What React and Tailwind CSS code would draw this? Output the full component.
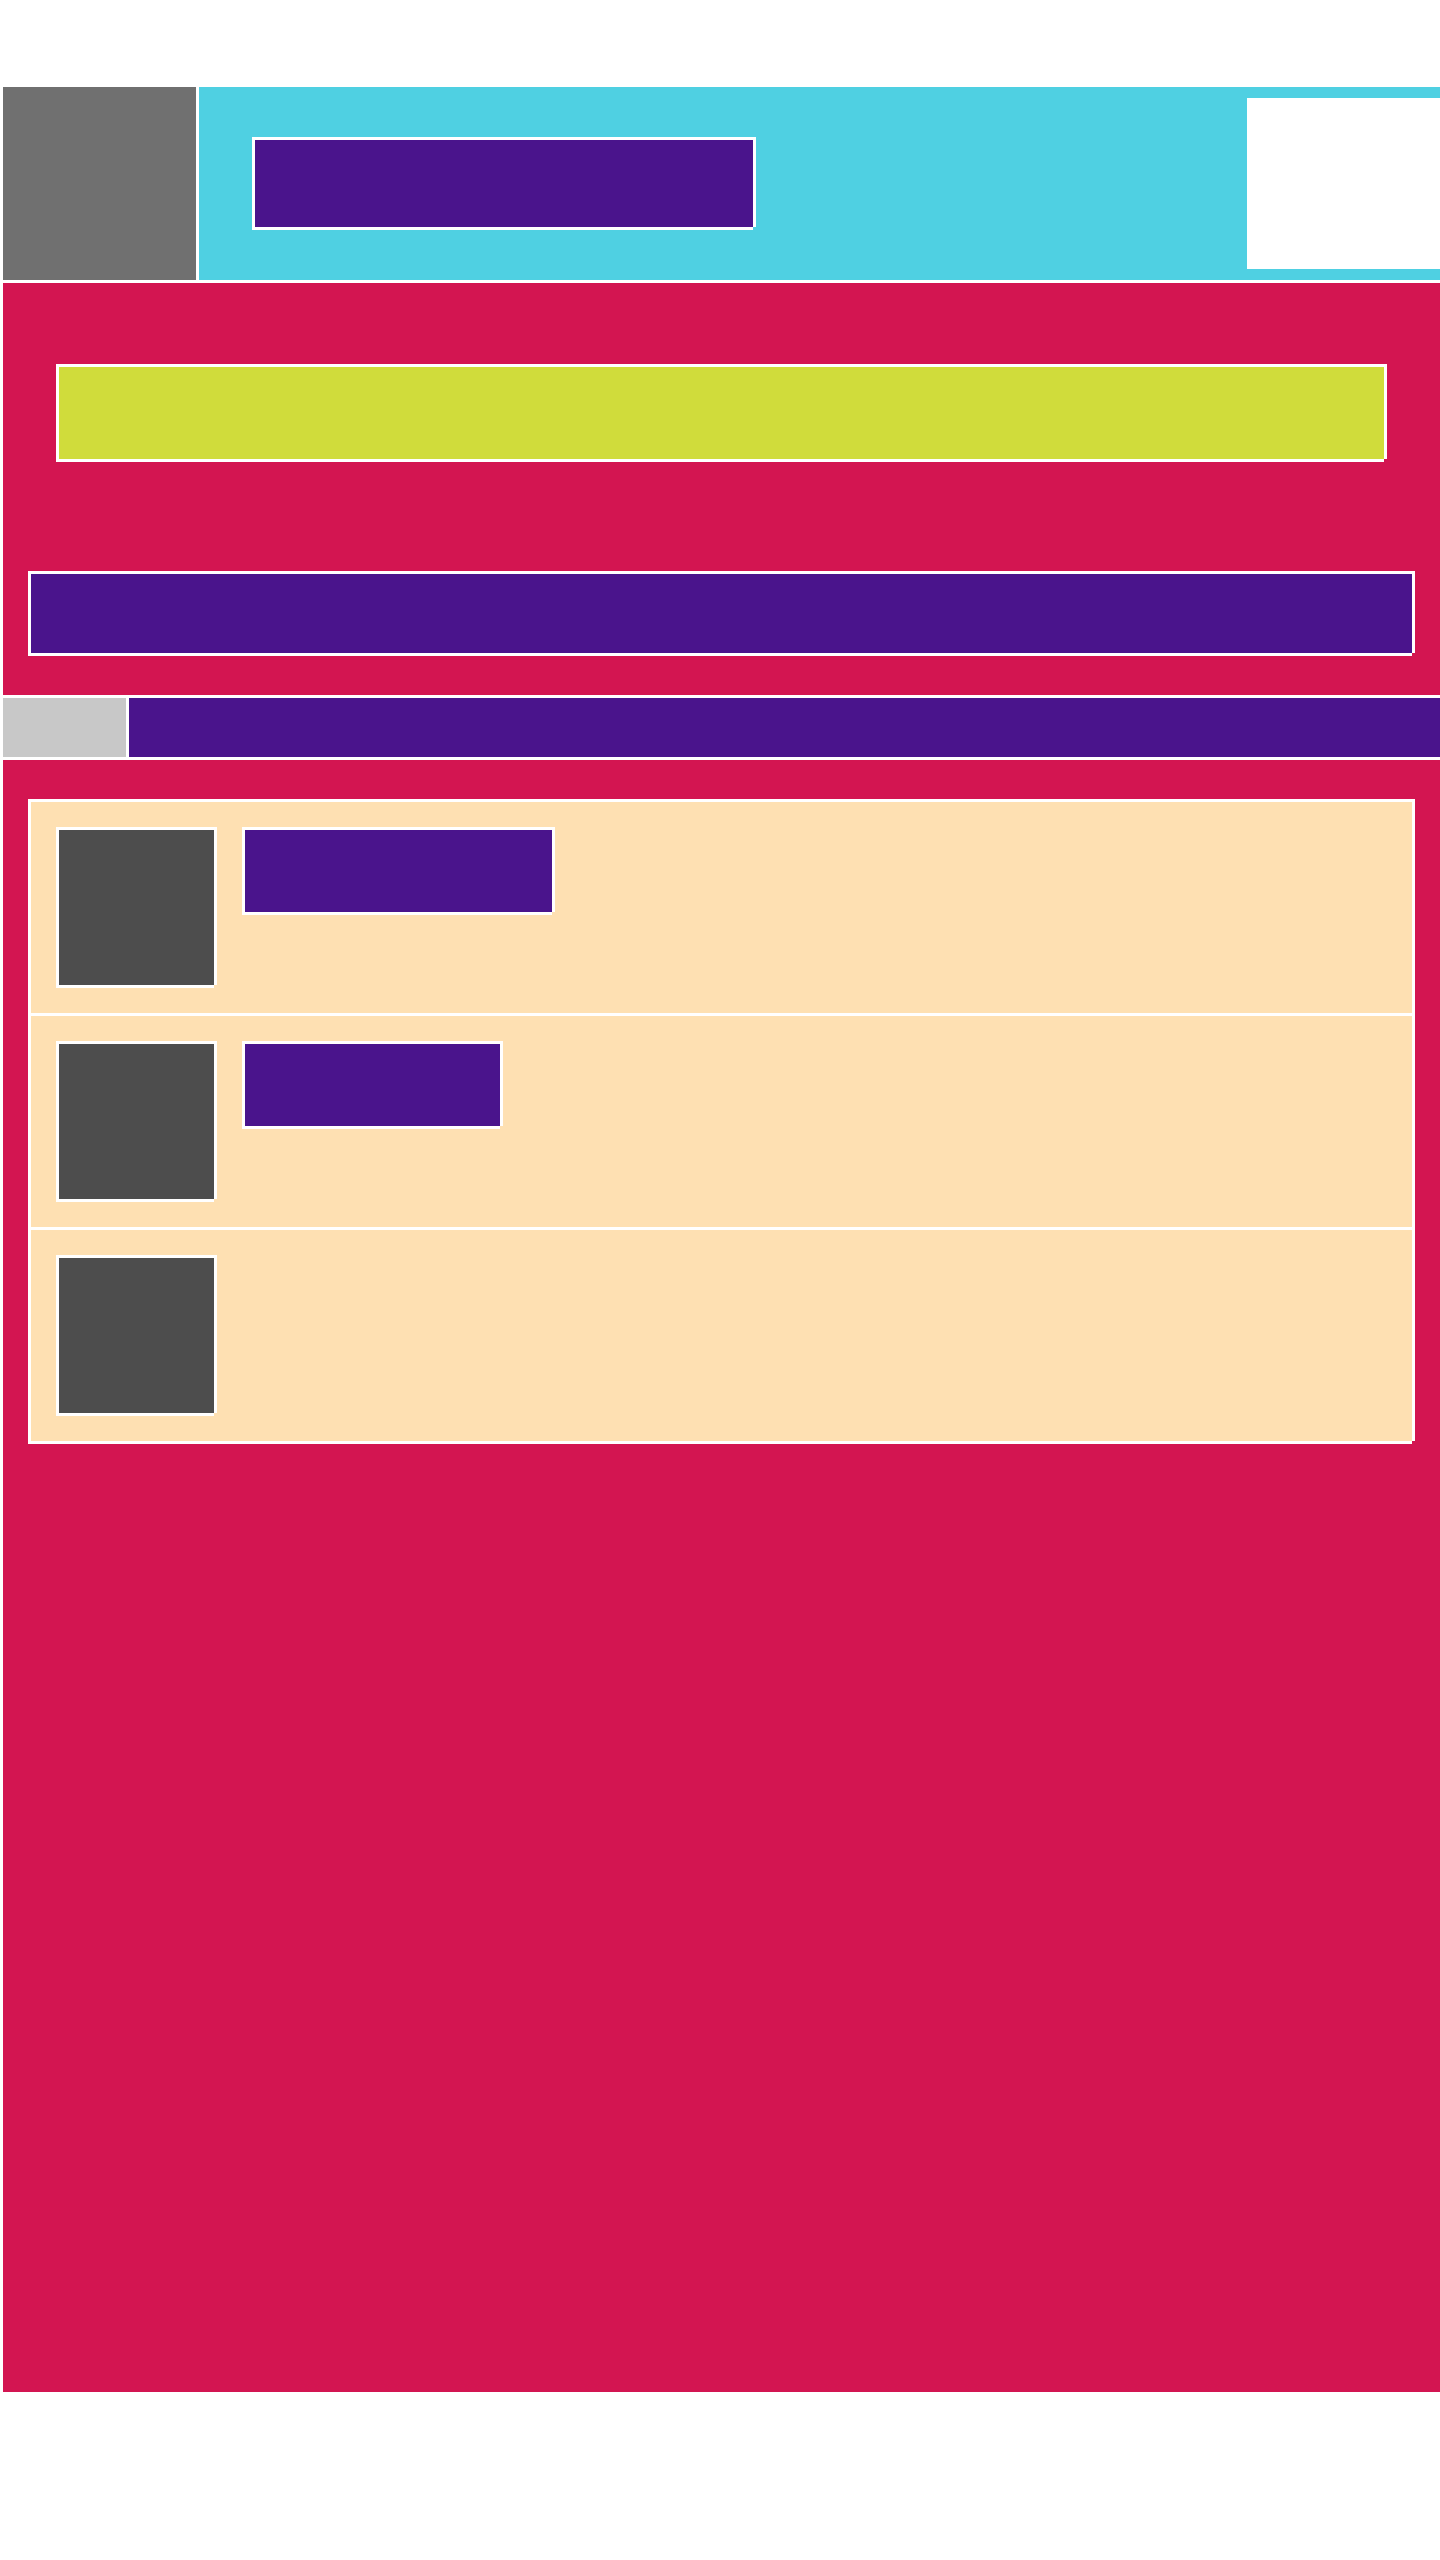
import React from "react";

const notch = "border-t-[3px] border-l-[3px] border-white shadow-[3px_0_0_#ffffff,0_3px_0_#ffffff]";

function Row({ title, titleW, first }) {
  return (
    <div className={`h-[211px] box-content pt-[25px] pl-[25px] flex items-start ${first ? "" : "border-t-[3px] border-white"}`} style={{ height: first ? 186 : 186 }}>
      <div className={`w-[158px] h-[158px] bg-[#4d4d4d] shrink-0 ${notch}`} />
      {title ? (
        <div className={`ml-[28px] h-[85px] bg-[#4a148c] ${notch}`} style={{ width: titleW }} />
      ) : null}
    </div>
  );
}

export default function App() {
  return (
    <div className="w-[1440px] bg-white pt-[87px] pl-[3px] font-['Liberation_Sans',sans-serif] overflow-hidden">
      {/* header */}
      <div className="flex h-[193px] gap-[3px]">
        <div className="w-[193px] shrink-0 bg-[#707070]" />
        <div className="flex-1 flex items-start bg-[#4fd0e2]">
          <div className={`ml-[53px] mt-[50px] w-[501px] h-[90px] bg-[#4a148c] ${notch}`} />
          <div className="ml-auto mt-[11px] w-[193px] h-[171px] bg-white" />
        </div>
      </div>

      {/* section 1 */}
      <div className="mt-[3px] h-[412px] bg-[#d31551] pt-[81px]">
        <div className={`ml-[53px] w-[1328px] h-[95px] bg-[#d0dc3b] ${notch}`} />
        <div className={`ml-[25px] mt-[112px] w-[1384px] h-[82px] bg-[#4a148c] ${notch}`} />
      </div>

      {/* nav row */}
      <div className="mt-[3px] flex h-[59px] gap-[3px]">
        <div className="w-[123px] shrink-0 bg-[#c8c8c8]" />
        <div className="flex-1 bg-[#4a148c]" />
      </div>

      {/* section 2 */}
      <div className="mt-[3px] h-[1632px] bg-[#d31551] pt-[39px]">
        <div className={`ml-[25px] w-[1384px] bg-[#fee0b2] ${notch}`}>
          <div className="h-[211px] pt-[25px] pl-[25px] flex items-start">
            <div className={`w-[158px] h-[158px] bg-[#4d4d4d] shrink-0 ${notch}`} />
            <div className={`ml-[28px] w-[310px] h-[85px] bg-[#4a148c] ${notch}`} />
          </div>
          <div className="h-[214px] border-t-[3px] border-white pt-[25px] pl-[25px] flex items-start">
            <div className={`w-[158px] h-[158px] bg-[#4d4d4d] shrink-0 ${notch}`} />
            <div className={`ml-[28px] w-[258px] h-[85px] bg-[#4a148c] ${notch}`} />
          </div>
          <div className="h-[214px] border-t-[3px] border-white pt-[25px] pl-[25px] flex items-start">
            <div className={`w-[158px] h-[158px] bg-[#4d4d4d] shrink-0 ${notch}`} />
          </div>
        </div>
      </div>
    </div>
  );
}
